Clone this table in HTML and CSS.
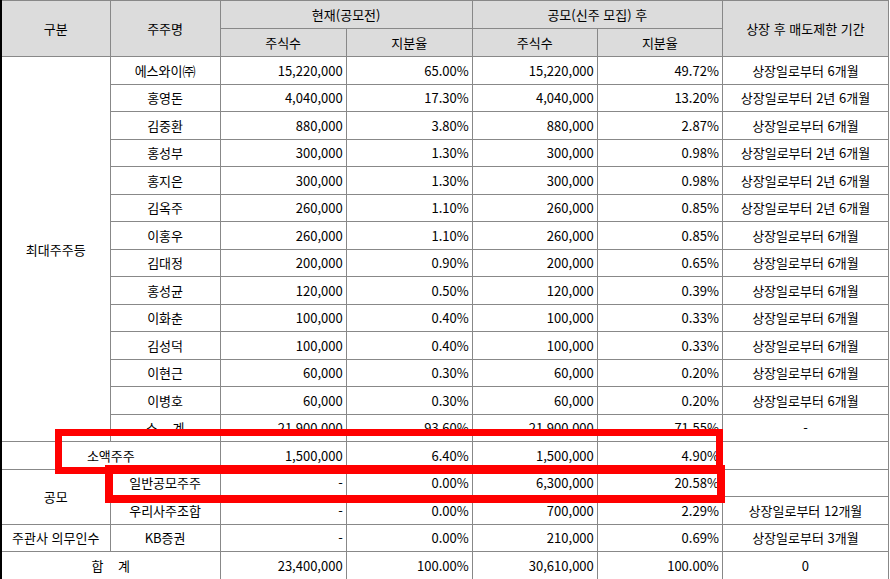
FILE: index.html
```html
<!DOCTYPE html>
<html lang="ko">
<head>
<meta charset="utf-8">
<link rel="stylesheet" href="styles.css">
</head>
<body>
<div class="wrap">
<table class="grid">
<colgroup>
<col class="c1"><col class="c2"><col class="c3"><col class="c4"><col class="c5"><col class="c6"><col class="c7">
</colgroup>
<thead>
<tr class="hrow">
<th rowspan="2">구분</th>
<th rowspan="2">주주명</th>
<th colspan="2">현재(공모전)</th>
<th colspan="2">공모(신주 모집) 후</th>
<th rowspan="2">상장 후 매도제한 기간</th>
</tr>
<tr class="hrow">
<th>주식수</th><th>지분율</th><th>주식수</th><th>지분율</th>
</tr>
</thead>
<tbody>
<tr><td rowspan="14" class="ctr">최대주주등</td><td class="ctr">에스와이㈜</td><td class="num">15,220,000</td><td class="num">65.00%</td><td class="num">15,220,000</td><td class="num">49.72%</td><td class="ctr">상장일로부터 6개월</td></tr>
<tr><td class="ctr">홍영돈</td><td class="num">4,040,000</td><td class="num">17.30%</td><td class="num">4,040,000</td><td class="num">13.20%</td><td class="ctr">상장일로부터 2년 6개월</td></tr>
<tr><td class="ctr">김중환</td><td class="num">880,000</td><td class="num">3.80%</td><td class="num">880,000</td><td class="num">2.87%</td><td class="ctr">상장일로부터 6개월</td></tr>
<tr><td class="ctr">홍성부</td><td class="num">300,000</td><td class="num">1.30%</td><td class="num">300,000</td><td class="num">0.98%</td><td class="ctr">상장일로부터 2년 6개월</td></tr>
<tr><td class="ctr">홍지은</td><td class="num">300,000</td><td class="num">1.30%</td><td class="num">300,000</td><td class="num">0.98%</td><td class="ctr">상장일로부터 2년 6개월</td></tr>
<tr><td class="ctr">김옥주</td><td class="num">260,000</td><td class="num">1.10%</td><td class="num">260,000</td><td class="num">0.85%</td><td class="ctr">상장일로부터 2년 6개월</td></tr>
<tr><td class="ctr">이홍우</td><td class="num">260,000</td><td class="num">1.10%</td><td class="num">260,000</td><td class="num">0.85%</td><td class="ctr">상장일로부터 6개월</td></tr>
<tr><td class="ctr">김대정</td><td class="num">200,000</td><td class="num">0.90%</td><td class="num">200,000</td><td class="num">0.65%</td><td class="ctr">상장일로부터 6개월</td></tr>
<tr><td class="ctr">홍성균</td><td class="num">120,000</td><td class="num">0.50%</td><td class="num">120,000</td><td class="num">0.39%</td><td class="ctr">상장일로부터 6개월</td></tr>
<tr><td class="ctr">이화춘</td><td class="num">100,000</td><td class="num">0.40%</td><td class="num">100,000</td><td class="num">0.33%</td><td class="ctr">상장일로부터 6개월</td></tr>
<tr><td class="ctr">김성덕</td><td class="num">100,000</td><td class="num">0.40%</td><td class="num">100,000</td><td class="num">0.33%</td><td class="ctr">상장일로부터 6개월</td></tr>
<tr><td class="ctr">이현근</td><td class="num">60,000</td><td class="num">0.30%</td><td class="num">60,000</td><td class="num">0.20%</td><td class="ctr">상장일로부터 6개월</td></tr>
<tr><td class="ctr">이병호</td><td class="num">60,000</td><td class="num">0.30%</td><td class="num">60,000</td><td class="num">0.20%</td><td class="ctr">상장일로부터 6개월</td></tr>
<tr><td class="ctr spread">소 계</td><td class="num">21,900,000</td><td class="num">93.60%</td><td class="num">21,900,000</td><td class="num">71.55%</td><td class="ctr">-</td></tr>
<tr><td colspan="2" class="ctr">소액주주</td><td class="num">1,500,000</td><td class="num">6.40%</td><td class="num">1,500,000</td><td class="num">4.90%</td><td class="ctr"></td></tr>
<tr><td rowspan="2" class="ctr">공모</td><td class="ctr">일반공모주주</td><td class="num">-</td><td class="num">0.00%</td><td class="num">6,300,000</td><td class="num">20.58%</td><td class="ctr"></td></tr>
<tr><td class="ctr">우리사주조합</td><td class="num">-</td><td class="num">0.00%</td><td class="num">700,000</td><td class="num">2.29%</td><td class="ctr">상장일로부터 12개월</td></tr>
<tr><td class="ctr">주관사 의무인수</td><td class="ctr">KB증권</td><td class="num">-</td><td class="num">0.00%</td><td class="num">210,000</td><td class="num">0.69%</td><td class="ctr">상장일로부터 3개월</td></tr>
<tr><td colspan="2" class="ctr spread">합 계</td><td class="num">23,400,000</td><td class="num">100.00%</td><td class="num">30,610,000</td><td class="num">100.00%</td><td class="ctr">0</td></tr>
</tbody>
</table>
<div class="mark mark-a"></div>
<div class="mark mark-b"></div>
</div>
</body>
</html>
```
FILE: styles.css
```css
html, body {
  margin: 0;
  padding: 0;
  background: #ffffff;
}
body {
  font-family: "Noto Sans CJK KR", "Noto Sans", sans-serif;
  font-size: 13px;
  color: #000000;
}
.wrap {
  position: relative;
  width: 890px;
  height: 579px;
  overflow: hidden;
}
.grid {
  border-collapse: collapse;
  table-layout: fixed;
  width: 889px;
  border-top: 1px solid #000;
  border-left: 2px solid #000;
  border-bottom: 2px solid #000;
}
.c1 { width: 109px; }
.c2 { width: 110px; }
.c3 { width: 126px; }
.c4 { width: 126px; }
.c5 { width: 125px; }
.c6 { width: 125px; }
.c7 { width: 166px; }
.grid th, .grid td {
  border: 1px solid #888888;
  padding: 0 3px;
  line-height: 15px;
  white-space: nowrap;
  overflow: hidden;
}
.grid th {
  background: #dcdcdc;
  font-weight: normal;
  text-align: center;
  height: 27px;
}
.grid td {
  height: 26.5px;
}
.ctr { text-align: center; }
.num { text-align: right; }
.spread { word-spacing: 11px; }
.mark {
  position: absolute;
  box-sizing: border-box;
  border-style: solid;
  border-color: #ff0000;
}
.mark-a {
  left: 55px;
  top: 429px;
  width: 668px;
  height: 45px;
  border-width: 7px;
}
.mark-b {
  left: 105px;
  top: 465px;
  width: 620px;
  height: 38px;
  border-width: 8px;
}
```
